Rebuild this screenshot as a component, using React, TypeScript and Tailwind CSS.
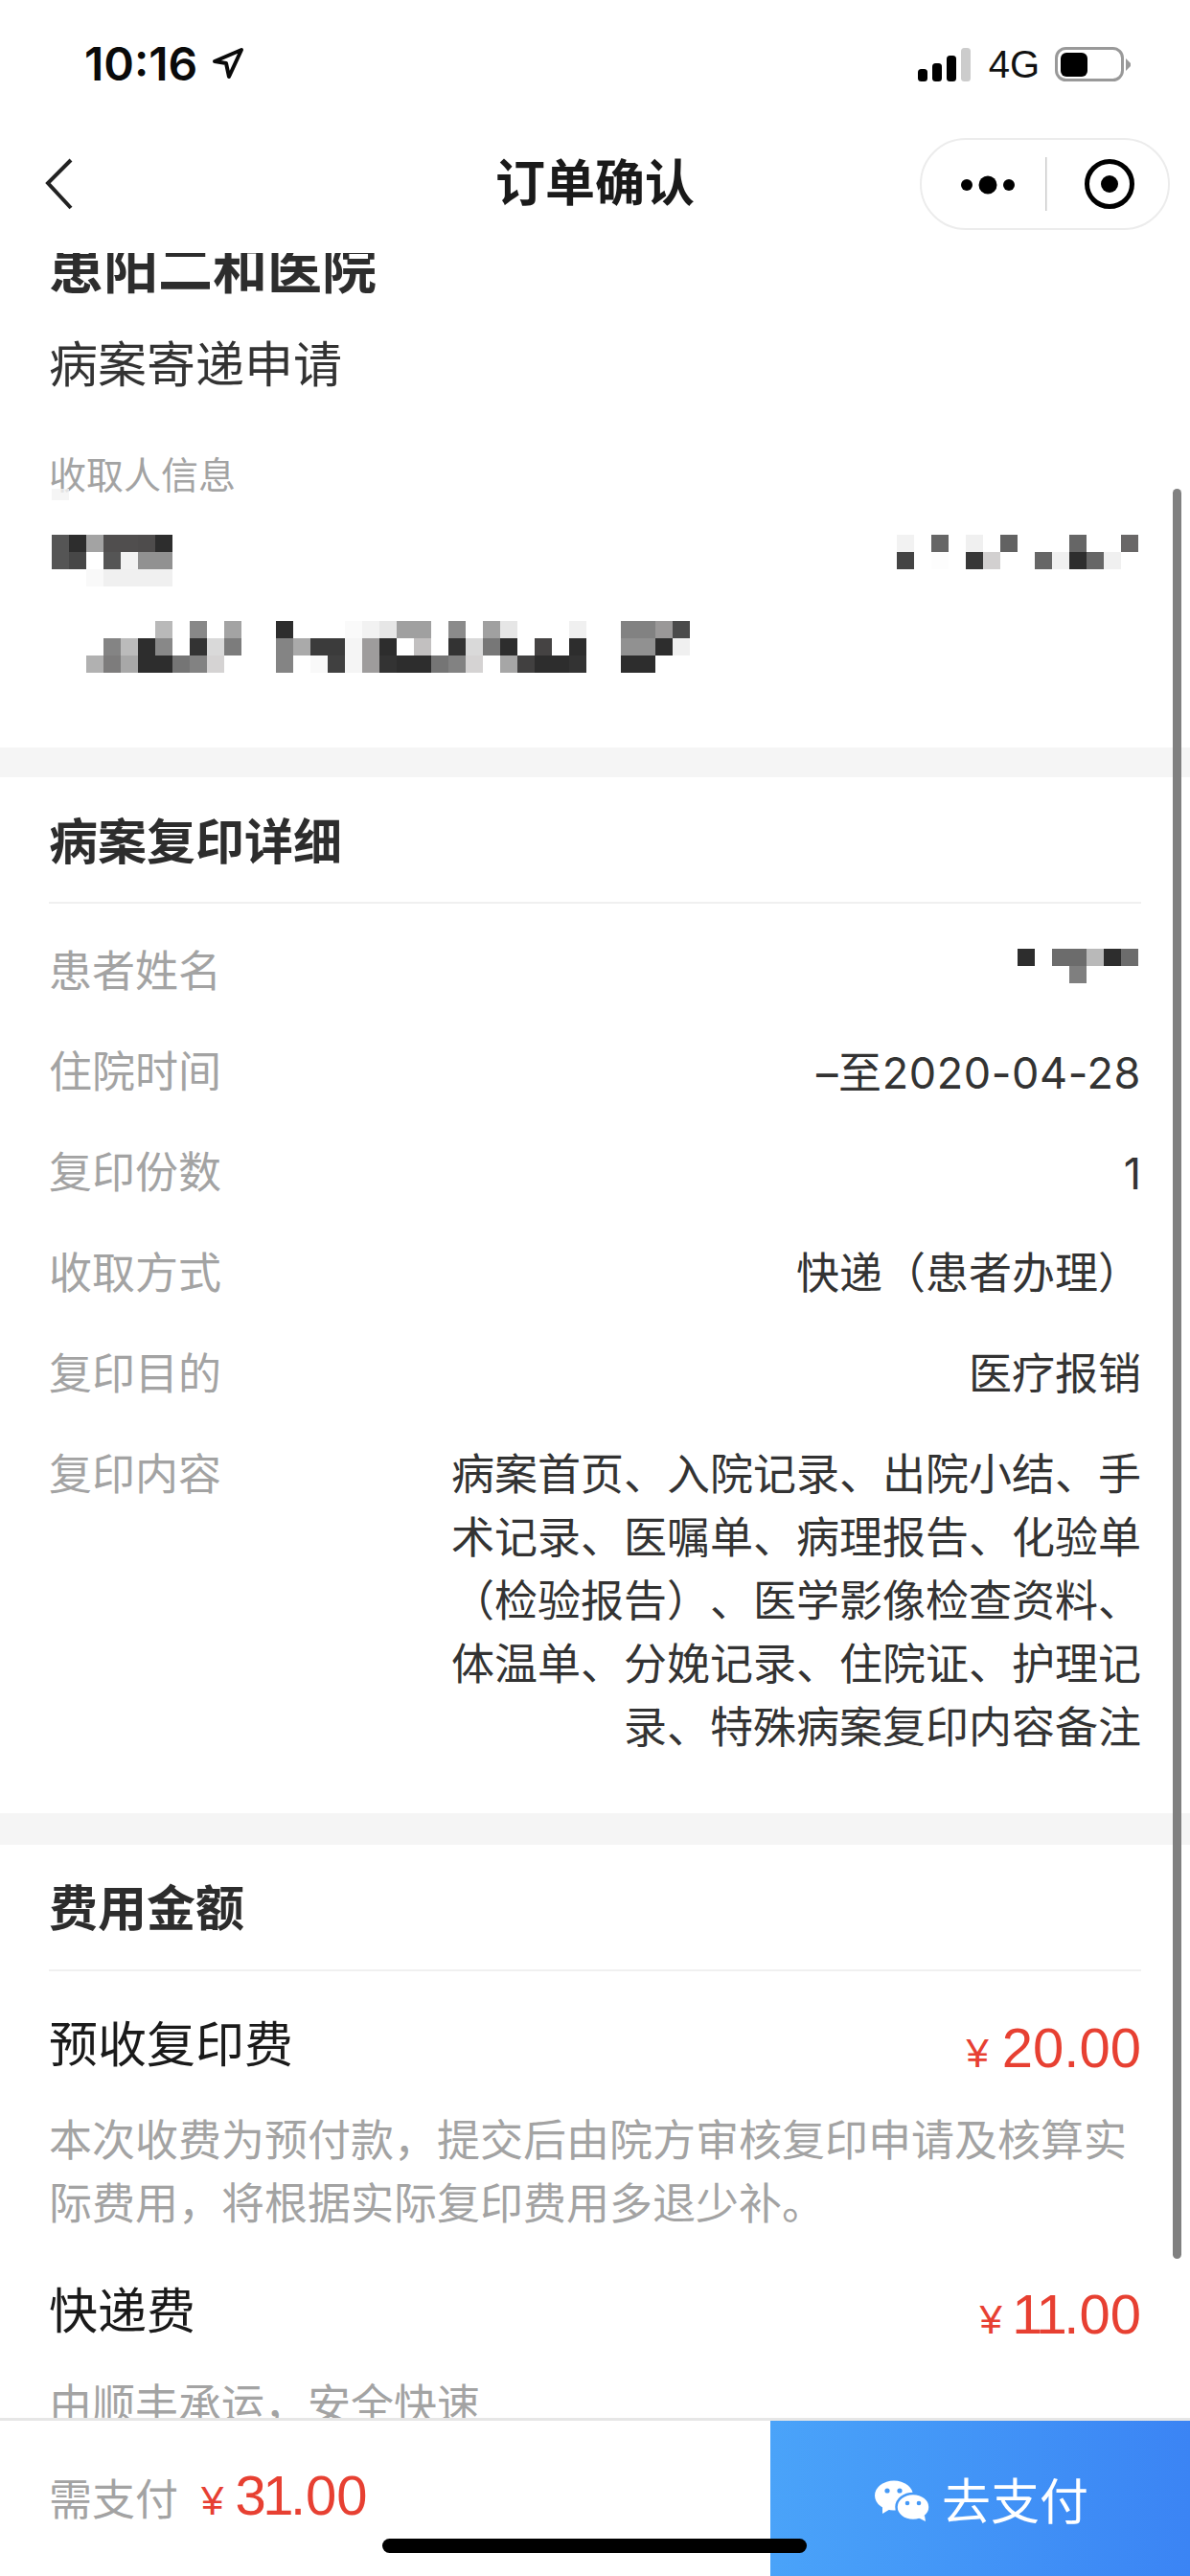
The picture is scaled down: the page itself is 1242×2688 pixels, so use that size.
import React from "react";

type Cell = string | null;
const _: Cell = null;

function Mosaic({ rows }: { rows: Cell[][] }) {
  const c = 18;
  const w = Math.max(...rows.map((r) => r.length)) * c;
  const h = rows.length * c;
  return (
    <svg width={w} height={h} viewBox={`0 0 ${w} ${h}`} shapeRendering="crispEdges" className="block shrink-0">
      {rows.map((r, y) =>
        r.map((f, x) => (f ? <rect key={`${x}-${y}`} x={x * c} y={y * c} width={c} height={c} fill={f} /> : null))
      )}
    </svg>
  );
}

const nameLeft: Cell[][] = [
  ["#555555", "#2d2d2d", "#a3a3a3", "#504e4e", "#504e4e", "#4e4c4c", "#2d2d2d"],
  ["#555555", "#474747", _, "#555555", "#f2f2f2", "#919191", "#919191"],
  [_, _, "#f9f9f9", "#f0f0f0", "#f0f0f0", "#f0f0f0", "#f0f0f0"],
];
const phone: Cell[][] = [
  ["#f2f2f2", _, "#666666", _, "#f0f0f0", _, "#626262", _, _, _, "#666666", _, _, "#696767"],
  ["#444444", _, "#fdfdfd", _, "#383838", "#d2d0d0", _, _, "#666666", "#f0f0f0", "#2d2d2d", "#666666", "#f0f0f0", _],
];
const address: Cell[][] = [
  [_, _, _, _, "#b9b9b9", _, "#888888", _, "#a3a3a3", _, _, "#2d2d2d", _, _, _, "#fafafa", "#f2f2f2", "#e6e6e6", "#a0a0a0", "#a0a0a0", _, "#8b8b8b", _, "#a0a0a0", "#e6e6e6", _, _, _, "#f0f0f0", _, _, "#828282", "#828282", "#9a9898", "#4a4a4a"],
  [_, "#848484", "#bbbbbb", "#2d2d2d", "#888888", _, "#333333", "#d9d9d9", "#7c7c7c", _, _, "#848484", "#aaaaaa", "#3b3b3b", "#3b3b3b", "#f5f5f5", "#9e9c9c", "#2d2d2d", _, "#c2c0c0", _, "#333333", "#d9d9d9", "#777777", "#2d2d2d", _, "#454343", _, "#2d2d2d", _, _, "#919191", "#919191", "#2d2d2d", "#f0f0f0"],
  ["#b1b1b1", "#7d7c7c", "#a8a8a8", "#2d2d2d", "#2d2d2d", "#757575", "#828282", "#d5d3d3", _, _, _, "#848484", _, "#f9f9f9", "#404040", "#f5f5f5", "#9e9c9c", "#333333", "#2d2d2d", "#2d2d2d", "#757575", "#828282", "#d5d3d3", _, "#a6a6a6", "#414040", "#2d2d2d", "#2d2d2d", "#333333", _, _, "#2d2d2d", "#2d2d2d", _, _],
];
const patient: Cell[][] = [
  ["#2d2d2d", _, "#6c6c6c", "#6c6c6c", "#b9b9b9", "#2d2d2d", "#6c6c6c"],
  [_, _, _, "#7f7f7f", _, _, _],
];

function Row({ label, children, last }: { label: string; children: React.ReactNode; last?: boolean }) {
  return (
    <div className={`flex justify-between px-[51px] text-[45px] leading-[66px] ${last ? "" : "mb-[39px]"}`}>
      <span className="text-[#a3a3a3] shrink-0">{label}</span>
      {children}
    </div>
  );
}

function One() {
  return <span className="-ml-[3.5px] tracking-[-3.5px]">1</span>;
}

function Price({ children, className, yenGap = "mr-[14px]" }: { children: React.ReactNode; className?: string; yenGap?: string }) {
  return (
    <span className={`flex items-baseline leading-[60px] text-[#e74032] ${className ?? ""}`}>
      <span className={`text-[42px] ${yenGap}`}>¥</span>
      <span className="text-[58px]">{children}</span>
    </span>
  );
}

function SectionHead({ title, pt, pb }: { title: string; pt: string; pb: string }) {
  return (
    <div className={`mx-[51px] border-b-2 border-[#f0f0f0] text-[51px] leading-[72px] font-bold text-[#2d2d2d] ${pt} ${pb}`}>
      {title}
    </div>
  );
}

export default function App() {
  return (
    <div className="relative flex flex-col w-[1242px] h-[2688px] overflow-hidden bg-white [font-family:'Liberation_Sans','Noto_Sans_CJK_SC',sans-serif]">
      {/* status bar */}
      <div className="flex items-center justify-between h-[134px] shrink-0 pl-[88px] pr-[61px]">
        <div className="flex items-center gap-[14px]">
          <span className="text-[48px] leading-[48px] font-semibold text-[#0a0a0a] [font-family:Inter,sans-serif]">10:16</span>
          <svg width="36" height="36" viewBox="0 0 36 36" fill="none" stroke="#0a0a0a" strokeWidth="4" strokeLinejoin="round">
            <path d="M4 15 L32 3 L19 31 L16 17 Z" />
          </svg>
        </div>
        <div className="flex items-center">
          <svg width="55" height="35" viewBox="0 0 55 35">
            <rect x="0" y="22" width="10" height="13" rx="3.5" fill="#000" />
            <rect x="15" y="16" width="10" height="19" rx="3.5" fill="#000" />
            <rect x="30" y="8" width="10" height="27" rx="3.5" fill="#000" />
            <rect x="45" y="0" width="10" height="35" rx="3.5" fill="#cccccc" />
          </svg>
          <span className="ml-[19px] mr-[16px] text-[40px] leading-[40px] text-[#111]">4G</span>
          <svg width="80" height="37" viewBox="0 0 80 37">
            <rect x="1.5" y="1.5" width="69" height="33" rx="10" fill="none" stroke="#999999" strokeWidth="3" />
            <rect x="6" y="6" width="28" height="25" rx="6" fill="#000" />
            <path d="M74 12 L79 17 L79 20 L74 25 Z" fill="#999999" />
          </svg>
        </div>
      </div>

      {/* nav bar */}
      <div className="grid grid-cols-[1fr_auto_1fr] items-center h-[130px] shrink-0 pb-[14px]">
        <svg width="30" height="54" viewBox="0 0 30 54" className="ml-[47px]" fill="none" stroke="#222222" strokeWidth="4">
          <path d="M27 2 L3 26 L27 52" />
        </svg>
        <div className="text-[52px] leading-[72px] font-semibold text-[#1a1a1a]">订单确认</div>
        <div className="justify-self-end mr-[21px] flex items-center w-[261px] h-[96px] rounded-[48px] border-2 border-[#ececec]">
          <svg width="261" height="96" viewBox="0 0 261 96" className="shrink-0 -m-[2px]">
            <circle cx="49" cy="49" r="6" fill="#000" />
            <circle cx="71" cy="49" r="9.5" fill="#000" />
            <circle cx="93" cy="49" r="6" fill="#000" />
            <rect x="131" y="20" width="1.5" height="56" fill="#cccccc" />
            <circle cx="198" cy="48" r="23.5" fill="none" stroke="#000" strokeWidth="5" />
            <circle cx="198" cy="48" r="9" fill="#000" />
          </svg>
        </div>
      </div>

      {/* scrolled content */}
      <div className="flex-1 min-h-0 overflow-hidden">
        <div className="-mt-[23px]">
          <section className="pb-[78px]">
            <div className="px-[51px] text-[57px] leading-[80px] font-bold text-[#2d2d2d]">患阳二和医院</div>
            <div className="px-[51px] mt-[25px] text-[51px] leading-[72px] text-[#333333]">病案寄递申请</div>
            <div className="px-[51px] mt-[52px] text-[39px] leading-[54px] text-[#a3a3a3]">收取人信息</div>
            <div className="flex justify-between pl-[54px] pr-[54px] mt-[34px]">
              <Mosaic rows={nameLeft} />
              <Mosaic rows={phone} />
            </div>
            <div className="pl-[90px] mt-[36px]">
              <Mosaic rows={address} />
            </div>
          </section>

          <div className="h-[31px] bg-[#f5f5f5]" />

          <section className="pb-[55px]">
            <SectionHead title="病案复印详细" pt="pt-[33px]" pb="pb-[25px]" />
            <div className="mt-[39px] text-[#333333]">
              <Row label="患者姓名">
                <div className="mt-[8px] mr-[3px]">
                  <Mosaic rows={patient} />
                </div>
              </Row>
              <Row label="住院时间">
                <span className="tracking-[0.6px] [font-family:Inter,'Noto_Sans_CJK_SC',sans-serif]">–至2020-04-28</span>
              </Row>
              <Row label="复印份数">
                <span className="[font-family:Inter,sans-serif]">1</span>
              </Row>
              <Row label="收取方式">
                <span>快递（患者办理）</span>
              </Row>
              <Row label="复印目的">
                <span>医疗报销</span>
              </Row>
              <Row label="复印内容" last>
                <div className="text-right [text-spacing-trim:space-all]">
                  病案首页、入院记录、出院小结、手
                  <br />
                  术记录、医嘱单、病理报告、化验单
                  <br />
                  （检验报告）、医学影像检查资料、
                  <br />
                  体温单、分娩记录、住院证、护理记
                  <br />
                  录、特殊病案复印内容备注
                </div>
              </Row>
            </div>
          </section>

          <div className="h-[33px] bg-[#f5f5f5]" />

          <section>
            <SectionHead title="费用金额" pt="pt-[32px]" pb="pb-[26px]" />
            <div className="px-[51px] mt-[42px] flex justify-between items-center h-[72px] text-[51px] leading-[72px] text-[#1a1a1a]">
              <span>预收复印费</span>
              <Price className="mt-[10px]">20.00</Price>
            </div>
            <div className="px-[51px] mt-[31px] text-[45px] leading-[66px] text-[#a3a3a3]">
              本次收费为预付款，提交后由院方审核复印申请及核算实
              <br />
              际费用，将根据实际复印费用多退少补。
            </div>
            <div className="px-[51px] mt-[43px] flex justify-between items-center h-[72px] text-[51px] leading-[72px] text-[#1a1a1a]">
              <span>快递费</span>
              <Price className="mt-[10px]">
                <One />
                <One />
                .00
              </Price>
            </div>
            <div className="px-[51px] mt-[29px] text-[45px] leading-[66px] text-[#a3a3a3]">由顺丰承运，安全快速</div>
          </section>
        </div>
      </div>

      {/* footer */}
      <div className="flex h-[165px] shrink-0 border-t-[3px] border-[#e6e6e6] bg-white">
        <div className="flex-1 flex items-center pl-[51px] pb-[1px]">
          <span className="text-[45px] leading-[66px] text-[#a3a3a3] mr-[24px] mt-[7px]">需支付</span>
          <Price yenGap="mr-[12px]">
            3<One />
            .00
          </Price>
        </div>
        <div className="w-[438px] flex items-center justify-center gap-[12px] pl-[3px] pt-[10px] bg-gradient-to-r from-[#4aa3f9] to-[#3b84f4] text-white text-[51px] leading-[72px]">
          <svg width="58" height="47" viewBox="0 0 58 47" className="shrink-0 -mt-[6px]">
            <ellipse cx="20" cy="18" rx="20" ry="15.5" fill="#fff" />
            <path d="M8 28 L8 37 L18 31 Z" fill="#fff" />
            <ellipse cx="40" cy="30" rx="17.5" ry="14" fill="#fff" stroke="#4599f7" strokeWidth="2.5" />
            <path d="M45 41 L53 45 L52 39 Z" fill="#fff" />
            <circle cx="13" cy="13" r="2.6" fill="#4599f7" />
            <circle cx="26" cy="13" r="2.6" fill="#4599f7" />
            <circle cx="34" cy="26" r="2.3" fill="#4599f7" />
            <circle cx="46" cy="26" r="2.3" fill="#4599f7" />
          </svg>
          <span>去支付</span>
        </div>
      </div>

      {/* overlays */}
      <div className="absolute left-[54px] top-[510px] w-[18px] h-[12px] bg-[#f2f2f2]/80" />
      <div className="absolute left-[1224px] top-[510px] w-[9px] h-[1847px] rounded-full bg-[#808080]" />
      <div className="absolute left-[399px] top-[2649px] w-[443px] h-[15px] rounded-full bg-black" />
    </div>
  );
}
